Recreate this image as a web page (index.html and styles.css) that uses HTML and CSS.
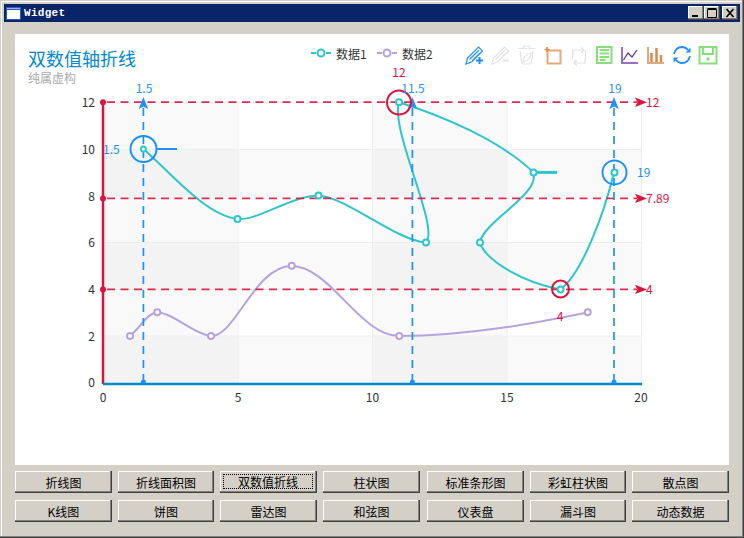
FILE: index.html
```html
<!DOCTYPE html>
<html lang="zh">
<head>
<meta charset="utf-8">
<title>Widget</title>
<link rel="stylesheet" href="styles.css">
</head>
<body>
<div class="window">
  <header class="titlebar">
    <svg class="app-icon" viewBox="0 0 15 13"><rect width="15" height="13" fill="#2a5cc0"/><rect x="1" y="3" width="13" height="9" fill="#fff"/><rect x="1" y="1" width="13" height="1" fill="#8fb4ee"/></svg>
    <span class="title-text">Widget</span>
    <div class="caption-buttons">
      <button class="cap"><svg viewBox="0 0 14 12"><rect x="3" y="8" width="6" height="2" fill="#000"/></svg></button>
      <button class="cap"><svg viewBox="0 0 14 12"><path d="M2.5 2.5h9v8h-9z M2.5 1.500h9" fill="none" stroke="#000"/></svg></button>
      <button class="cap cap-close"><svg viewBox="0 0 14 12"><path d="M3.500 2l7 8M10.500 2l-7 8" fill="none" stroke="#000" stroke-width="1.600"/></svg></button>
    </div>
  </header>
  <main class="content">
    <div class="chart-card">
      <svg class="chart" viewBox="15 34 714 431">
        <text class="title" x="28" y="66">双数值轴折线</text>
        <text class="subtitle" x="28" y="83">纯属虚构</text>

        <g class="legend">
          <path class="ln teal2" d="M311 53h20"/><circle class="dot teal" cx="321" cy="53" r="3.500"/>
          <text class="legend-text" x="336" y="59">数据1</text>
          <path class="ln purple2" d="M377 53h20"/><circle class="dot purple" cx="387" cy="53" r="3.500"/>
          <text class="legend-text" x="402" y="59">数据2</text>
        </g>

        <g class="icons">
          <g class="i-blue"><path d="M466 64l1.500-6L478.500 47l4 4L471.500 62zM469.500 59.500l9.500-9.500M472 61l8-8"/><path class="thick" d="M476 60.500h7M479.500 57v7"/></g>
          <g class="i-gray"><path d="M492 64l1.500-6L504.500 47l4 4L497.500 62zM495.500 59.500l9.500-9.500"/><path class="thick" d="M503 60.500h6"/></g>
          <g class="i-gray"><path d="M518 48.500h17M523 48.500l1-2.500h5l1 2.500M520 51l1.500 11q.3 2 2 2h6q1.700 0 2-2l1.500-11M523 62c0-5 4-8 8-9 0 4-3 8-8 9z"/></g>
          <g class="i-orange"><path class="thick" d="M547.500 50.500h13v13h-13z"/><path class="plus" d="M544.500 49.500h5M547 47v5"/></g>
          <g class="i-gray"><path d="M573 55v-5h10M583 50v3M585 58v5h-10M575 63v-3M581 47.500l3 2.500-3 2.500M577 60.500l-3 2.500 3 2.500M572.500 50v9M585.500 50v9"/></g>
          <g class="i-green"><rect x="597" y="47" width="14.500" height="16"/><path class="thick" d="M599.500 50h9.500M599.500 53.500h9.500M599.500 57h9.500M599.500 60h6"/></g>
          <g class="i-purple"><path class="thick" d="M622 47v16h16"/><path class="i-dark" d="M623.500 60l4.500-7 4 4 5-7"/></g>
          <g class="i-orange"><path class="thick" d="M648 47v16h16"/><path class="bars" d="M651.500 53v9M656.500 48v14M661 55v7"/></g>
          <g class="i-refresh"><path d="M674 54c1-4 4-7 8-7 2.500 0 4.500 1 6 3M690 56c-1 4-4 7-8 7-2.500 0-4.500-1-6-3"/><path class="fill" d="M690.500 47.500v5h-5zM673.500 62.500v-5h5z"/></g>
          <g class="i-green"><rect x="699.500" y="47" width="17" height="16.500"/><path d="M703 47v7h10v-7"/><rect class="fillg" x="706.500" y="57.500" width="3" height="3"/></g>
        </g>

        <g class="bands">
          <rect x="103" y="102.200" width="134.500" height="280.800"/>
          <rect x="372" y="102.200" width="135" height="280.800"/>
          <rect x="103" y="149" width="538" height="46.800"/>
          <rect x="103" y="242.600" width="538" height="46.800"/>
          <rect x="103" y="336.200" width="538" height="46.800"/>
        </g>
        <path class="grid" d="M103 102.500H641M103 149.500H641M103 196H641M103 242.500H641M103 289.500H641M103 336H641M238 102V383M372.500 102V383M507 102V383M641.500 102V383"/>

        <g class="axis-labels">
          <text class="ylab" x="95" y="107">12</text>
          <text class="ylab" x="95" y="154">10</text>
          <text class="ylab" x="95" y="201">8</text>
          <text class="ylab" x="95" y="247">6</text>
          <text class="ylab" x="95" y="294">4</text>
          <text class="ylab" x="95" y="341">2</text>
          <text class="ylab" x="95" y="387">0</text>
          <text class="xlab" x="103" y="402">0</text>
          <text class="xlab" x="238" y="402">5</text>
          <text class="xlab" x="372.500" y="402">10</text>
          <text class="xlab" x="507" y="402">15</text>
          <text class="xlab" x="641" y="402">20</text>
        </g>

        <path class="curve c-purple" d="M130 336C140 328 147 313 157 312.500C172 312 195 335 211 336C235 337 255 266 291.500 266C330 266 360 336 399 336C470 336 540 322 587.500 312.500"/>
        <path class="curve c-teal" d="M143.400 149C170 172 205 215 237.500 219C258 221 290 196 318 195.800C345 196 395 240 426 242.600C440 228 390 130 399 102.200C440 115 500 140 533.400 172.400C540 195 485 220 479.600 242.600C487 262 525 283 560 289.400C582 275 605 210 614 172.400"/>

        <path class="dash-red" d="M103 102.200H637M103 198.400H637M103 289.400H637"/>
        <path class="dash-blue" d="M143.400 382V104M412.400 382V104M614 382V104"/>
        <g class="red-fill">
          <circle cx="103" cy="102.200" r="3"/><circle cx="103" cy="198.400" r="3"/><circle cx="103" cy="289.400" r="3"/>
          <path d="M635 97.500l12 4.700-12 4.700 2.500-4.700z"/><path d="M635 193.700l12 4.700-12 4.700 2.500-4.700z"/><path d="M635 284.700l12 4.700-12 4.700 2.500-4.700z"/>
        </g>
        <g class="blue-fill">
          <circle cx="143.400" cy="382" r="2.500"/><circle cx="412.400" cy="382" r="2.500"/><circle cx="614" cy="382" r="2.500"/>
          <path d="M143.400 97l4.700 12-4.700-2.500-4.700 2.500z"/><path d="M412.400 97l4.700 12-4.700-2.500-4.700 2.500z"/><path d="M614 97l4.700 12-4.700-2.500-4.700 2.500z"/>
        </g>

        <path class="axis-y" d="M103 102V384"/>
        <path class="axis-x" d="M103 384H642"/>

        <path class="tick-blue" d="M157 149H177"/>
        <path class="tick-teal" d="M533 172.400H557"/>

        <g class="teal">
          <circle class="dot" cx="143.400" cy="149" r="2.500"/><circle class="dot" cx="237.500" cy="219" r="3"/><circle class="dot" cx="318.500" cy="195.500" r="3"/><circle class="dot" cx="426" cy="242.500" r="3"/><circle class="dot" cx="399" cy="102.200" r="3"/><circle class="dot" cx="533.500" cy="172.400" r="3"/><circle class="dot" cx="480" cy="242.500" r="3"/><circle class="dot" cx="560.500" cy="289.400" r="3"/><circle class="dot" cx="614.500" cy="172.400" r="3"/>
        </g>
        <g class="purple">
          <circle class="dot" cx="130" cy="336" r="3"/><circle class="dot" cx="157.300" cy="312.300" r="3"/><circle class="dot" cx="211" cy="336" r="3"/><circle class="dot" cx="291.700" cy="265.700" r="3"/><circle class="dot" cx="399.300" cy="336" r="3"/><circle class="dot" cx="587.700" cy="312.300" r="3"/>
        </g>

        <circle class="ring-blue" cx="143.500" cy="149" r="13"/>
        <circle class="ring-blue" cx="614.500" cy="172.400" r="12"/>
        <circle class="ring-red" cx="399" cy="102.500" r="12"/>
        <circle class="ring-red" cx="560.500" cy="289" r="8.500"/>

        <text class="lab-blue mid" x="144" y="93">1.5</text>
        <text class="lab-blue mid" x="413" y="93">11.5</text>
        <text class="lab-blue mid" x="615" y="93">19</text>
        <text class="lab-blue" x="103" y="154">1.5</text>
        <text class="lab-blue" x="637" y="177">19</text>
        <text class="lab-red mid" x="399" y="77">12</text>
        <text class="lab-red mid" x="560" y="321">4</text>
        <text class="lab-red" x="646" y="107">12</text>
        <text class="lab-red" x="646" y="203">7.89</text>
        <text class="lab-red" x="646" y="294">4</text>
      </svg>
    </div>
    <div class="btn-grid">
      <button class="btn">折线图</button>
      <button class="btn">折线面积图</button>
      <button class="btn is-focus"><span class="focus-ring">双数值折线</span></button>
      <button class="btn">柱状图</button>
      <button class="btn">标准条形图</button>
      <button class="btn">彩虹柱状图</button>
      <button class="btn">散点图</button>
      <button class="btn">K线图</button>
      <button class="btn">饼图</button>
      <button class="btn">雷达图</button>
      <button class="btn">和弦图</button>
      <button class="btn">仪表盘</button>
      <button class="btn">漏斗图</button>
      <button class="btn">动态数据</button>
    </div>
  </main>
</div>
</body>
</html>
```
FILE: styles.css
```css
* { box-sizing: border-box; }
html, body { margin: 0; padding: 0; }
body { width: 744px; height: 538px; overflow: hidden; background: #d4d0c8; }

.window {
  width: 744px;
  height: 538px;
  padding: 4px;
  background: #d4d0c8;
  display: flex;
  flex-direction: column;
  box-shadow: inset -1px -1px 0 #404040, inset -2px -2px 0 #808080, inset 1px 1px 0 #d4d0c8, inset 2px 2px 0 #fff;
}

.titlebar {
  height: 18px;
  flex: none;
  background: #0a246a;
  display: flex;
  align-items: center;
  padding: 0 2px;
}
.app-icon { width: 15px; height: 13px; display: block; flex: none; }
.title-text {
  margin-left: 3px;
  color: #fff;
  font: bold 11px/18px "Liberation Mono", monospace;
  letter-spacing: 0.3px;
}
.caption-buttons { margin-left: auto; display: flex; gap: 0; }
.cap {
  width: 16px;
  height: 14px;
  padding: 0;
  border: none;
  background: #d4d0c8;
  box-shadow: inset -1px -1px 0 #404040, inset -2px -2px 0 #808080, inset 1px 1px 0 #fff;
}
.cap svg { display: block; width: 14px; height: 12px; margin: 1px; }
.cap-close { margin-left: 2px; }

.content {
  flex: 1;
  display: flex;
  flex-direction: column;
  padding: 12px 11px 0;
  gap: 6px;
}
.chart-card { height: 431px; flex: none; background: #fff; }
.chart { display: block; width: 714px; height: 431px; }

.btn-grid {
  display: grid;
  grid-template-columns: 97px 96px 97px 98px 97px 96px 97px;
  grid-auto-rows: 22px;
  column-gap: 6px;
  row-gap: 7px;
}
.btn {
  padding: 0;
  border: none;
  background: #d4d0c8;
  color: #000;
  font: 12px "Noto Sans CJK SC", sans-serif;
  box-shadow: inset -1px -1px 0 #404040, inset -2px -2px 0 #808080, inset 1px 1px 0 #fff;
}
.btn:nth-child(7n+4) { margin-right: 1px; }
.is-focus { display: flex; padding: 3px 4px 4px 3px; }
.focus-ring { flex: 1; border: 1px dotted #000; line-height: 13px; }

/* chart text */
.chart text { font-family: "Noto Sans CJK SC", sans-serif; font-size: 12px; }
.chart .title { font-size: 18px; fill: #008acd; }
.chart .subtitle { fill: #aaa; }
.legend-text { fill: #333; }
.ylab { fill: #333; text-anchor: end; }
.xlab { fill: #333; text-anchor: middle; }
.lab-blue { fill: #1e90ff; }
.lab-red { fill: #dc143c; }
.mid { text-anchor: middle; }

/* chart shapes */
.bands rect { fill: rgba(200, 200, 200, 0.1); }
.grid { fill: none; stroke: #eee; stroke-width: 1; }
.curve { fill: none; stroke-width: 2; }
.c-teal { stroke: #2ec7c9; }
.c-purple { stroke: #b6a2de; }
.dash-red { fill: none; stroke: #dc143c; stroke-width: 1.7; stroke-dasharray: 8 5.500; stroke-dashoffset: -4; opacity: .9; }
.dash-blue { fill: none; stroke: #1e90ff; stroke-width: 1.7; stroke-dasharray: 8 6; }
.red-fill { fill: #dc143c; }
.blue-fill { fill: #1e90ff; }
.axis-y { stroke: #dc143c; stroke-width: 2.500; fill: none; }
.axis-x { stroke: #008acd; stroke-width: 2.500; fill: none; }
.tick-blue { stroke: #1e90ff; stroke-width: 2; }
.tick-teal { stroke: #2ec7c9; stroke-width: 3; }
.ln { fill: none; stroke-width: 2; stroke-dasharray: 5 10 5; }
.teal2 { stroke: #2ec7c9; }
.purple2 { stroke: #b6a2de; }
.dot { fill: #fff; stroke-width: 2; }
.teal .dot, .dot.teal { stroke: #2ec7c9; }
.purple .dot, .dot.purple { stroke: #b6a2de; }
.ring-blue { fill: none; stroke: #1e90ff; stroke-width: 2; }
.ring-red { fill: none; stroke: #dc143c; stroke-width: 2; }

/* toolbox icons */
.icons path, .icons rect { fill: none; stroke-width: 1.200; }
.icons .thick { stroke-width: 2; }
.icons .plus { stroke-width: 1.500; stroke: #d98a50; }
.i-blue path { stroke: #1e90ff; }
.i-gray path { stroke: #e3e3e3; }
.i-orange path { stroke: #e6a878; }
.i-green path, .i-green rect { stroke: #87e07c; stroke-width: 2; }
.i-purple path { stroke: #9b6fbf; }
.icons .i-dark { stroke: #5b2d8c; }
.icons .bars { stroke: #d98a50; stroke-width: 2.500; }
.i-refresh path { stroke: #1e90ff; stroke-width: 1.800; }
.icons .fill { fill: #1e90ff; stroke: none; }
.icons .fillg { fill: #87e07c; stroke: none; }
```
